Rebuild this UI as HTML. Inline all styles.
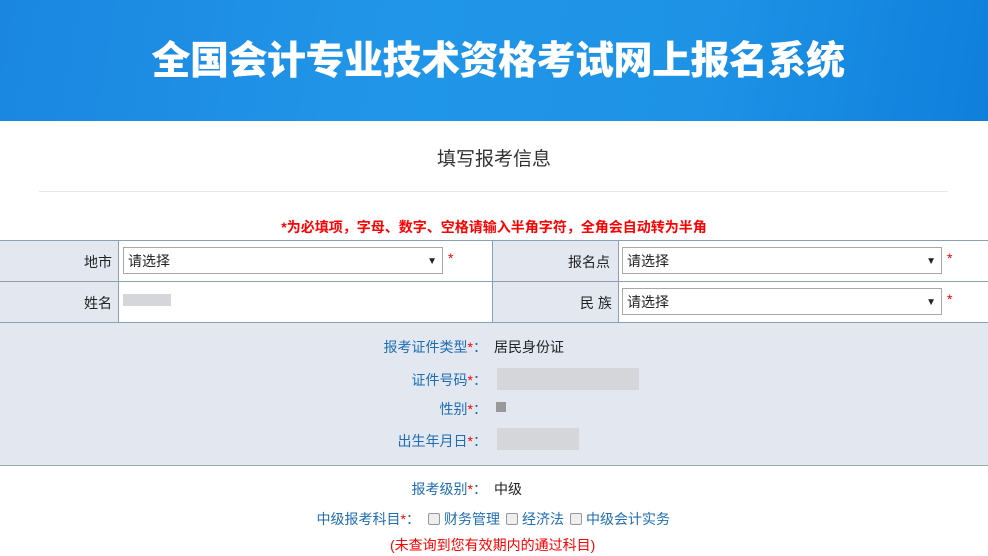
<!DOCTYPE html>
<html><head><meta charset="utf-8"><style>
body{margin:0;width:988px;height:556px;overflow:hidden;background:#fff;font-family:"Liberation Sans","Noto Sans CJK SC",sans-serif;font-size:14px;color:#222;position:relative}
.hd{position:absolute;left:0;top:0;width:988px;height:121px;background:linear-gradient(100deg,#1a86e0 0%,#2196e8 40%,#1e93e6 70%,#0f7fdc 100%)}
.hd h1{position:absolute;left:0;width:996px;top:30px;margin:0;text-align:center;color:#fff;font-size:39px;font-weight:900;letter-spacing:-0.5px}
.t{position:absolute;top:144px;width:988px;text-align:center;font-size:19px;color:#333}
.hr{position:absolute;left:39px;width:909px;top:191px;height:1px;background:#e8e8e8}
.note{position:absolute;top:217px;left:0;width:988px;text-align:center;color:#f00;font-weight:bold;font-size:14px}
.a{position:absolute}
.g{background:#e3e8f0}
.ln{position:absolute;background:#8aa0b8}
.sel{position:absolute;height:27px;border:1px solid #a8a8a8;background:#fff;box-sizing:border-box;font-size:14px;line-height:27px;padding-left:4px}
.sel:after{content:"▼";position:absolute;right:5px;top:0;font-size:10px}
.lb{position:absolute;text-align:right;color:#1f6db3;font-size:14px}
.lb i{color:#f00;font-style:normal}
.v{position:absolute;font-size:14px;color:#222}
.st{position:absolute;color:#f00}
.blur{position:absolute;background:#d4d6da}
.cb{display:inline-block;width:10px;height:10px;border:1px solid #999;border-radius:2px;background:#eee;vertical-align:-1px;margin:0 4px 0 8px}
</style></head><body>
<div class="hd"><h1>全国会计专业技术资格考试网上报名系统</h1></div>
<div class="t">填写报考信息</div>
<div class="hr"></div>
<div class="note">*为必填项，字母、数字、空格请输入半角字符，全角会自动转为半角</div>
<div class="a g" style="left:0;top:240px;width:118px;height:82px"></div>
<div class="a g" style="left:492px;top:240px;width:126px;height:82px"></div>
<div class="a g" style="left:0;top:322px;width:988px;height:143px"></div>
<div class="ln" style="left:0;top:240px;width:988px;height:1px"></div>
<div class="ln" style="left:0;top:281px;width:988px;height:1px"></div>
<div class="ln" style="left:0;top:322px;width:988px;height:1px"></div>
<div class="ln" style="left:0;top:465px;width:988px;height:1px;background:#9aa"></div>
<div class="ln" style="left:118px;top:240px;width:1px;height:82px"></div>
<div class="ln" style="left:492px;top:240px;width:1px;height:82px"></div>
<div class="ln" style="left:618px;top:240px;width:1px;height:82px"></div>
<div class="v" style="left:84px;top:252px">地市</div>
<div class="sel" style="left:123px;top:247px;width:320px">请选择</div><div class="st" style="left:448px;top:250px">*</div>
<div class="v" style="left:568px;top:252px">报名点</div>
<div class="sel" style="left:622px;top:247px;width:320px">请选择</div><div class="st" style="left:947px;top:250px">*</div>
<div class="v" style="left:84px;top:293px">姓名</div>
<div class="blur" style="left:123px;top:294px;width:48px;height:12px"></div>
<div class="v" style="left:580px;top:293px">民 族</div>
<div class="sel" style="left:622px;top:288px;width:320px">请选择</div><div class="st" style="left:947px;top:291px">*</div>
<div class="lb" style="left:300px;width:187px;top:337px">报考证件类型<i>*</i>：</div><div class="v" style="left:494px;top:337px">居民身份证</div>
<div class="lb" style="left:300px;width:187px;top:370px">证件号码<i>*</i>：</div><div class="blur" style="left:497px;top:368px;width:142px;height:22px"></div>
<div class="lb" style="left:300px;width:187px;top:399px">性别<i>*</i>：</div><div class="blur" style="left:496px;top:402px;width:10px;height:10px;background:#999"></div>
<div class="lb" style="left:300px;width:187px;top:431px">出生年月日<i>*</i>：</div><div class="blur" style="left:497px;top:428px;width:82px;height:22px"></div>
<div class="lb" style="left:300px;width:187px;top:479px">报考级别<i>*</i>：</div><div class="v" style="left:494px;top:479px">中级</div>
<div class="lb" style="left:290px;width:130px;top:509px">中级报考科目<i>*</i>：</div>
<div class="v" style="left:420px;top:509px;color:#1f6db3"><span class="cb"></span>财务管理<span class="cb" style="margin-left:6px"></span>经济法<span class="cb" style="margin-left:6px"></span>中级会计实务</div>
<div class="v" style="left:390px;top:535px;color:#f00">(未查询到您有效期内的通过科目)</div>
</body></html>
